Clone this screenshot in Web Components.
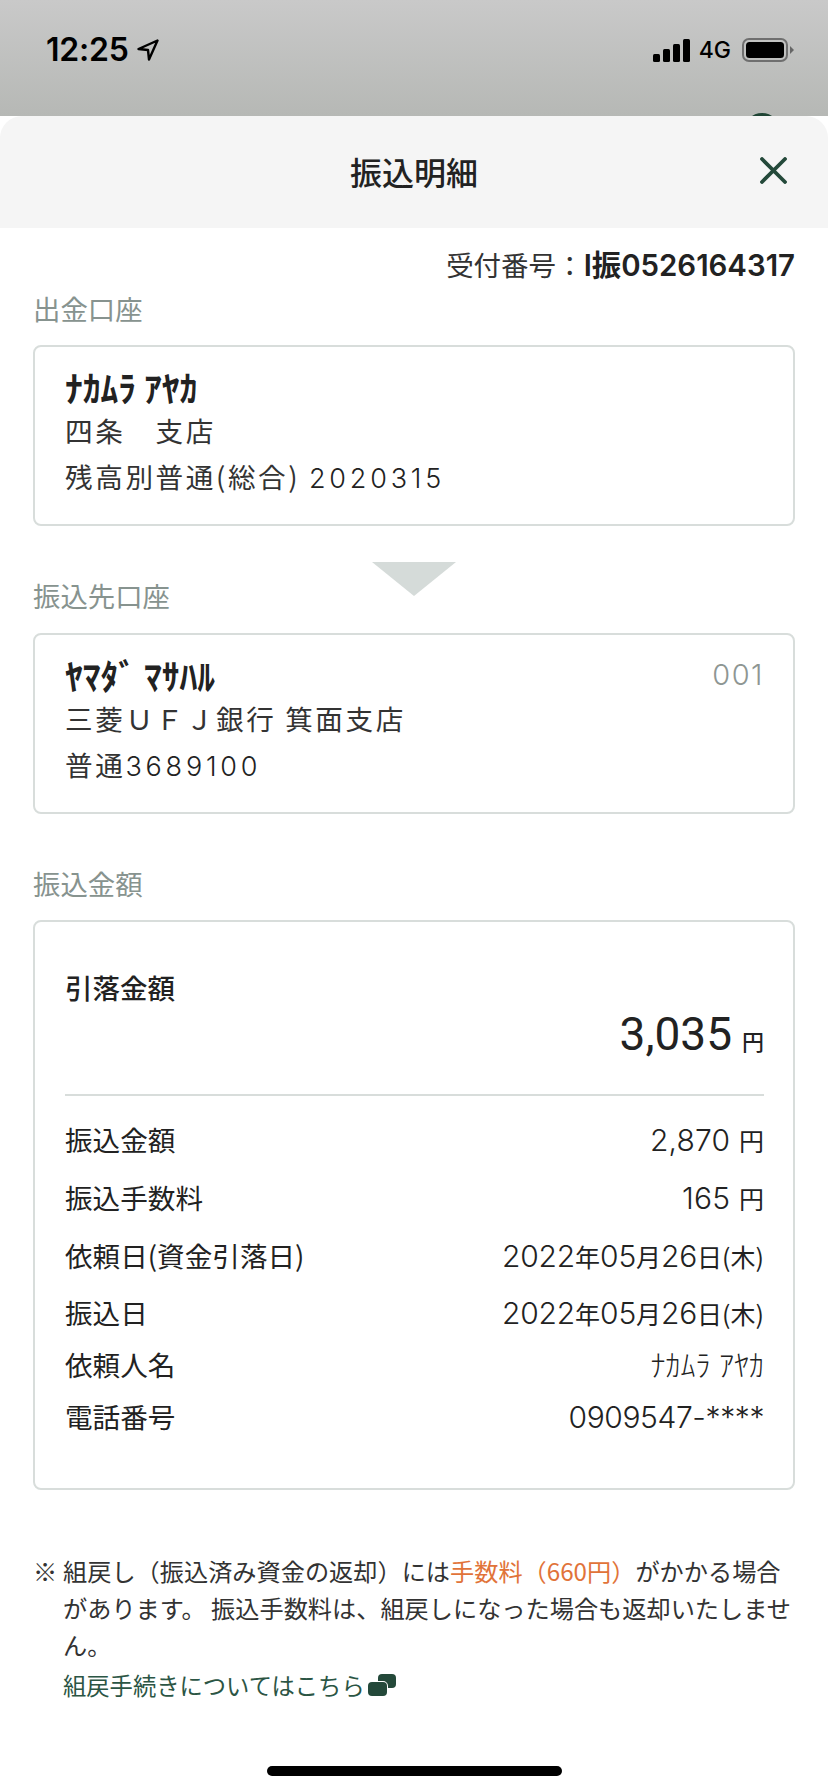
<!DOCTYPE html>
<html lang="ja">
<head>
<meta charset="utf-8">
<style>
    html, body { margin: 0; padding: 0; }
    body {
        width: 828px;
        height: 1792px;
        overflow: hidden;
        background: #fff;
        font-family: "Noto Sans CJK JP", "Noto Sans", sans-serif;
        color: #222;
    }
</style>
</head>
<body>
<status-bar></status-bar>
<detail-sheet title-text="振込明細">
    <receipt-number slot="top" label="受付番号：" value="I振0526164317"></receipt-number>

    <section-label>出金口座</section-label>
    <account-card name="ﾅｶﾑﾗ ｱﾔｶ" line1="四条　支店" line2="残高別普通(総合) 2020315"></account-card>
    <down-arrow></down-arrow>
    <section-label class="after-arrow">振込先口座</section-label>
    <account-card name="ﾔﾏﾀﾞ ﾏｻﾊﾙ" line1="三菱ＵＦＪ銀行 箕面支店" line2="普通3689100" code="001"></account-card>
    <section-label class="third">振込金額</section-label>
    <amount-card>
        <amount-row label="振込金額" value="2,870 円" h="58" ls="0.2"></amount-row>
        <amount-row label="振込手数料" value="165 円" h="58" ls="0.2"></amount-row>
        <amount-row label="依頼日(資金引落日)" value="2022年05月26日(木)" h="58" ls="-0.2"></amount-row>
        <amount-row label="振込日" value="2022年05月26日(木)" h="56" ls="-0.2"></amount-row>
        <amount-row label="依頼人名" value="ﾅｶﾑﾗ ｱﾔｶ" h="48" ls="0"></amount-row>
        <amount-row label="電話番号" value="0909547-****" h="56" ls="-0.4"></amount-row>
    </amount-card>
    <refund-note></refund-note>
</detail-sheet>
<home-bar></home-bar>

<script>
// status bar behind the sheet
class StatusBar extends HTMLElement {
    constructor() {
        super();
        this.attachShadow({ mode: 'open' });
        this.shadowRoot.innerHTML = `
            <style>
                :host {
                    display: flex;
                    align-items: flex-start;
                    justify-content: space-between;
                    height: 116px;
                    box-sizing: border-box;
                    padding: 34px 34px 0 46px;
                    background: linear-gradient(#c9c9c9, #b6b8b5);
                    color: #000;
                    position: relative;
                    font-family: "Inter", "Liberation Sans", sans-serif;
                }
                .left, .right { display: flex; align-items: center; height: 32px; }
                .time { font-size: 32px; font-weight: 600; letter-spacing: -0.2px; line-height: 32px; }
                .left svg { margin-left: 8px; }
                .g4 { font-size: 23px; font-weight: 500; margin: 0 11px 0 9px; }
                .dot {
                    position: absolute;
                    left: 744px;
                    top: 113px;
                    width: 36px;
                    height: 36px;
                    border-radius: 50%;
                    background: #1f4434;
                }
            </style>
            <div class="left">
                <span class="time">12:25</span>
                <svg width="22" height="22" viewBox="0 0 22 22"><path d="M20.5 1.5 L1.5 10 L11 11 L12 20.5 Z" fill="none" stroke="#000" stroke-width="2.4" stroke-linejoin="round"/></svg>
            </div>
            <div class="right">
                <svg width="37" height="23" viewBox="0 0 37 23"><rect x="0" y="15" width="7" height="8" rx="1.5"/><rect x="10" y="10" width="7" height="13" rx="1.5"/><rect x="20" y="5" width="7" height="18" rx="1.5"/><rect x="30" y="0" width="7" height="23" rx="1.5"/></svg>
                <span class="g4">4G</span>
                <svg width="52" height="24" viewBox="0 0 52 24"><rect x="1" y="1" width="44" height="22" rx="6" fill="none" stroke="#6f6f6f" stroke-width="2"/><rect x="4" y="4" width="38" height="16" rx="3.5"/><path d="M48 8 L52 12 L48 16 Z" fill="#666"/></svg>
            </div>
            <span class="dot"></span>
        `;
    }
}

// white sheet with its grey header
class DetailSheet extends HTMLElement {
    constructor() {
        super();
        this.attachShadow({ mode: 'open' });
    }

    connectedCallback() {
        this.shadowRoot.innerHTML = `
            <style>
                :host {
                    display: block;
                    position: absolute;
                    left: 0;
                    right: 0;
                    top: 116px;
                    bottom: 0;
                    background: #fff;
                    border-radius: 22px 22px 0 0;
                    overflow: hidden;
                }
                header {
                    height: 112px;
                    background: #f5f5f5;
                    display: flex;
                    align-items: center;
                    justify-content: center;
                    position: relative;
                }
                h1 {
                    margin: -2px 0 0;
                    font-size: 32px;
                    font-weight: 500;
                    line-height: 44px;
                    color: #222;
                }
                svg { position: absolute; left: 760px; top: 41px; }
                .body { padding: 0 33px; }
            </style>
            <header>
                <h1>${this.getAttribute('title-text')}</h1>
                <svg width="27" height="27" viewBox="0 0 27 27"><path d="M2 2 L25 25 M25 2 L2 25" stroke="#24493a" stroke-width="3.8" stroke-linecap="round" fill="none"/></svg>
            </header>
            <div class="body">
                <slot name="top"></slot>
                <slot></slot>
            </div>
        `;
    }
}

class ReceiptNumber extends HTMLElement {
    constructor() {
        super();
        this.attachShadow({ mode: 'open' });
    }

    connectedCallback() {
        this.shadowRoot.innerHTML = `
            <style>
                :host {
                    display: block;
                    text-align: right;
                    font-size: 27.5px;
                    line-height: 38px;
                    padding-top: 17px;
                    color: #333;
                }
                b { color: #222; font-family: "Inter", "Noto Sans CJK JP", sans-serif; font-weight: 600; font-size: 29.4px; }
            </style>
            ${this.getAttribute('label')}<b>${this.getAttribute('value')}</b>
        `;
    }
}

class SectionLabel extends HTMLElement {
    constructor() {
        super();
        this.attachShadow({ mode: 'open' });
        this.shadowRoot.innerHTML = `
            <style>
                :host {
                    display: block;
                    font-size: 27.4px;
                    line-height: 38px;
                    color: #87938f;
                    margin-top: 4px;
                    margin-bottom: 18px;
                }
                :host(.after-arrow) { margin-top: -20px; margin-bottom: 19px; }
                :host(.third) { margin-top: 50px; margin-bottom: 18px; }
            </style>
            <slot></slot>
        `;
    }
}

// account box: name, branch, account number
class AccountCard extends HTMLElement {
    constructor() {
        super();
        this.attachShadow({ mode: 'open' });
    }

    connectedCallback() {
        const code = this.getAttribute('code');
        const line2 = this.getAttribute('line2').replace(/\d+/, '<span class="num">$&</span>');
        this.shadowRoot.innerHTML = `
            <style>
                :host {
                    display: block;
                    box-sizing: border-box;
                    height: 181px;
                    border: 2px solid #d8dddb;
                    border-radius: 8px;
                    padding: 18px 29px 0 30px;
                }
                .name {
                    display: flex;
                    justify-content: space-between;
                    height: 43px;
                    line-height: 43px;
                    font-size: 35.5px;
                    font-weight: 700;
                    color: #222;
                }
                .code { font-size: 29px; color: #8e9693; letter-spacing: 1.5px; font-family: "Inter", sans-serif; font-weight: 300; }
                .line { font-size: 27.6px; line-height: 45.5px; letter-spacing: 2.6px; color: #333; white-space: nowrap; }
                .num { font-family: "Inter", sans-serif; font-weight: 300; font-size: 27px; letter-spacing: 3.8px; color: #222; }
            </style>
            <div class="name"><span>${this.getAttribute('name')}</span>${code ? `<span class="code">${code}</span>` : ''}</div>
            <div class="line">${this.getAttribute('line1')}</div>
            <div class="line">${line2}</div>
        `;
    }
}

class DownArrow extends HTMLElement {
    constructor() {
        super();
        this.attachShadow({ mode: 'open' });
        this.shadowRoot.innerHTML = `
            <style>
                :host { display: flex; justify-content: center; padding-top: 36px; height: 34px; }
            </style>
            <svg width="84" height="34" viewBox="0 0 84 34"><path d="M0 0 H84 L42 34 Z" fill="#d5dbd9"/></svg>
        `;
    }
}

// total on top, detail rows below the divider
class AmountCard extends HTMLElement {
    constructor() {
        super();
        this.attachShadow({ mode: 'open' });
        this.shadowRoot.innerHTML = `
            <style>
                :host {
                    display: block;
                    box-sizing: border-box;
                    height: 570px;
                    border: 2px solid #d8dddb;
                    border-radius: 8px;
                    padding: 45px 29px 0 30px;
                }
                .title { font-size: 27.5px; font-weight: 500; line-height: 40px; color: #222; }
                .total { text-align: right; line-height: 60px; margin-top: -3px; font-family: "Roboto", sans-serif; color: #222; }
                .total b { font-size: 46px; font-weight: 400; }
                .total span { font-size: 22px; font-weight: 500; font-family: "Noto Sans CJK JP", sans-serif; margin-left: 6px; }
                hr { border: 0; height: 2px; background: #d8dddb; margin: 19px 0 15px; }
            </style>
            <div class="title">引落金額</div>
            <div class="total"><b>3,035</b> <span>円</span></div>
            <hr>
            <slot></slot>
        `;
    }
}

class AmountRow extends HTMLElement {
    constructor() {
        super();
        this.attachShadow({ mode: 'open' });
    }

    connectedCallback() {
        const value = this.getAttribute('value').replace(/[\u3000-\u9fff()]+/g, '<span class="u">$&</span>');
        this.shadowRoot.innerHTML = `
            <style>
                :host {
                    display: flex;
                    justify-content: space-between;
                    align-items: center;
                    height: ${this.getAttribute('h')}px;
                    font-size: 27.6px;
                    line-height: 1.2;
                    color: #222;
                }
                .v { font-size: 30px; letter-spacing: ${this.getAttribute('ls')}px; font-family: "Inter", "Noto Sans CJK JP", sans-serif; font-weight: 300; white-space: nowrap; }
                .u { font-size: 25px; font-family: "Noto Sans CJK JP", sans-serif; font-weight: 400; letter-spacing: 0; }
            </style>
            <span>${this.getAttribute('label')}</span>
            <span class="v">${value}</span>
        `;
    }
}

class RefundNote extends HTMLElement {
    constructor() {
        super();
        this.attachShadow({ mode: 'open' });
        this.shadowRoot.innerHTML = `
            <style>
                :host {
                    display: flex;
                    margin-top: 62px;
                    font-size: 24.2px;
                    line-height: 37px;
                    color: #333;
                }
                .mark { width: 30px; flex: none; }
                em { font-style: normal; color: #e17339; }
                a { display: flex; align-items: center; margin-top: 4px; color: #2b5544; text-decoration: none; font-size: 23.3px; }
                a svg { margin-left: 3px; margin-top: -2px; }
            </style>
            <span class="mark">※</span>
            <div>
                <div>組戻し（振込済み資金の返却）には<em>手数料（660円）</em>がかかる場合<br>があります。 振込手数料は、組戻しになった場合も返却いたしません。</div>
                <a>組戻手続きについてはこちら<svg width="28" height="22" viewBox="0 0 28 22"><rect x="10" y="0" width="18" height="14" rx="4" fill="#24493a"/><rect x="0" y="8" width="19" height="14" rx="4" fill="#24493a" stroke="#fff" stroke-width="2" paint-order="stroke"/></svg></a>
            </div>
        `;
    }
}

class HomeBar extends HTMLElement {
    constructor() {
        super();
        this.attachShadow({ mode: 'open' });
        this.shadowRoot.innerHTML = `
            <style>
                :host {
                    display: block;
                    position: absolute;
                    left: 267px;
                    top: 1766px;
                    width: 295px;
                    height: 10px;
                    background: #000;
                    border-radius: 5px;
                }
            </style>
        `;
    }
}

customElements.define('status-bar', StatusBar);
customElements.define('detail-sheet', DetailSheet);
customElements.define('receipt-number', ReceiptNumber);
customElements.define('section-label', SectionLabel);
customElements.define('account-card', AccountCard);
customElements.define('down-arrow', DownArrow);
customElements.define('amount-card', AmountCard);
customElements.define('amount-row', AmountRow);
customElements.define('refund-note', RefundNote);
customElements.define('home-bar', HomeBar);
</script>
</body>
</html>
